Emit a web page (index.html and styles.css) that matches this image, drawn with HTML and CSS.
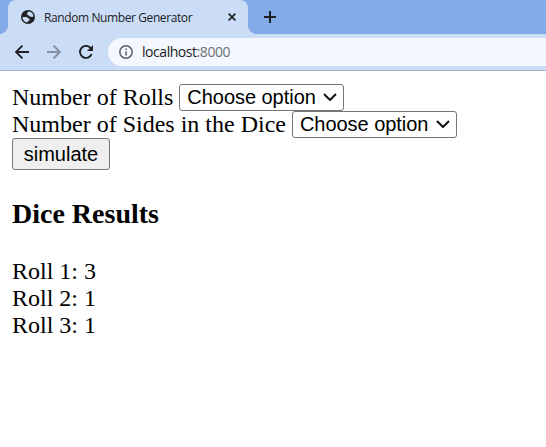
FILE: index.html
```html
<!DOCTYPE html>
<html lang="en">
<head>
<meta charset="utf-8">
<title>Random Number Generator</title>
<link rel="stylesheet" href="styles.css">
</head>
<body>
<header class="browser">
  <div class="tabs">
    <div class="tab">
      <svg class="globe" viewBox="0 0 14 14"><circle cx="7" cy="7" r="7"/><path class="land" d="M7.500 1.600C6.300 2.500 6 3.200 6.200 4.200c.3 1.200 1.600.8 2 1.600.4.900 1.500 1.400 2.600 1 .8-.3 1.300-.2 1.700.2C12.500 4 10.500 1.700 7.500 1.600zM1.500 7.200c1.500-.4 3.600-.5 4.700.1 1 .6.8 1.400 1.900 1.600 1 .3.900 1.300.1 1.700-1 .5-1.500.8-1.700 1.900C3.700 12.200 1.500 10 1.500 7.200z"/></svg>
      <span class="title">Random Number Generator</span>
      <svg class="close" viewBox="0 0 8 8"><path d="M.6.6l6.8 6.8M7.4.6L.6 7.4"/></svg>
    </div>
    <svg class="plus" viewBox="0 0 12 12"><path d="M6 0v12M0 6h12"/></svg>
  </div>
  <div class="toolbar">
    <svg class="nav" viewBox="0 0 14 14"><path d="M14 7H1.5M7.4.7L1.1 7l6.3 6.3"/></svg>
    <svg class="nav disabled" viewBox="0 0 14 14"><path d="M0 7h12.500M6.600.7L12.900 7l-6.300 6.300"/></svg>
    <svg class="nav" viewBox="0 0 14 14"><path d="M12.600 9.100A6 6 0 1 1 11.500 2.900"/><path class="solid" d="M14 0v6H8z"/></svg>
    <div class="address">
      <svg class="info" viewBox="0 0 14 14"><circle cx="7" cy="7" r="6.200"/><path d="M7 6.200v4.300M7 3.500v1.500"/></svg>
      <span class="url">localhost<span class="port">:8000</span></span>
    </div>
  </div>
</header>
<main class="page">
  <div class="row">
    <label for="rolls">Number of Rolls</label>
    <span class="picker"><select id="rolls"><option>Choose option</option></select><svg viewBox="0 0 14 8"><path d="M1 1l6 6 6-6"/></svg></span>
  </div>
  <div class="row">
    <label for="sides">Number of Sides in the Dice</label>
    <span class="picker"><select id="sides"><option>Choose option</option></select><svg viewBox="0 0 14 8"><path d="M1 1l6 6 6-6"/></svg></span>
  </div>
  <button class="simulate">simulate</button>
  <h3>Dice Results</h3>
  <div class="result">Roll 1: 3</div>
  <div class="result">Roll 2: 1</div>
  <div class="result">Roll 3: 1</div>
</main>
</body>
</html>
```
FILE: styles.css
```css
* { box-sizing: border-box; }
body { margin: 0; background: #fff; color: #000; overflow: hidden; }
svg { display: block; flex: none; fill: none; }
.browser { height: 71px; background: #cbdcf6; border-bottom: 1px solid #a5b2cc; font-family: "Open Sans", sans-serif; color: #202124; }
.tabs { display: flex; height: 34px; padding-left: 8px; background: #84abe9; }
.tab { position: relative; display: flex; align-items: center; width: 240px; padding-left: 13px; background: #cbdcf6; border-radius: 8px 8px 0 0; }
.tab::before, .tab::after { content: ""; position: absolute; bottom: 0; width: 8px; height: 8px; }
.tab::before { left: -8px; background: radial-gradient(circle at 0 0, #84abe9 7.500px, #cbdcf6 8px); }
.tab::after { right: -8px; background: radial-gradient(circle at 100% 0, #84abe9 7.500px, #cbdcf6 8px); }
.globe { width: 14px; height: 14px; fill: #202124; }
.globe .land { fill: #cbdcf6; }
.title { width: 148px; margin-left: 9px; font-size: 12px; letter-spacing: -.4px; white-space: nowrap; }
.close { width: 8px; height: 8px; margin-left: 36px; stroke: #202124; stroke-width: 1.700; }
.plus { width: 12px; height: 12px; margin: 11px 0 0 16px; stroke: #202124; stroke-width: 2; }
.toolbar { display: flex; align-items: center; height: 36px; padding-left: 15px; }
.nav { width: 14px; height: 14px; margin-right: 18px; stroke: #202124; stroke-width: 1.900; }
.nav.disabled { stroke: #858fa3; }
.nav .solid { fill: #202124; stroke: none; }
.address { display: flex; align-items: center; flex: 1; height: 28px; margin-left: -3px; padding-left: 11px; background: #f4f7fd; border-radius: 14px 0 0 14px; }
.info { width: 14px; height: 14px; stroke: #5f6368; stroke-width: 1.500; }
.url { margin-left: 9px; font-size: 14px; letter-spacing: -.45px; margin-top: -2px; }
.port { color: #6b7078; }
.page { padding: 13px 12px 0; font: 24px/27px "Liberation Serif", serif; }
.row { display: flex; align-items: center; height: 27px; gap: 6px; }
.picker { position: relative; width: 165px; height: 27px; }
select { display: block; appearance: none; width: 165px; height: 27px; margin: 0; padding: 0 0 2px 7px; border: 1px solid #767676; border-radius: 3px; background: #fff; color: #000; font: 20px "Liberation Sans", sans-serif; letter-spacing: -.04px; }
.picker svg { position: absolute; right: 7px; top: 9px; width: 14px; height: 8px; stroke: #111; stroke-width: 2; pointer-events: none; }
.simulate { display: block; width: 98px; height: 32px; margin: 0; padding: 0; border: 1px solid #767676; border-radius: 3px; background: #efefef; color: #000; font: 20px "Liberation Sans", sans-serif; }
h3 { margin: 28px 0; font-size: 28px; line-height: 32px; }
```
